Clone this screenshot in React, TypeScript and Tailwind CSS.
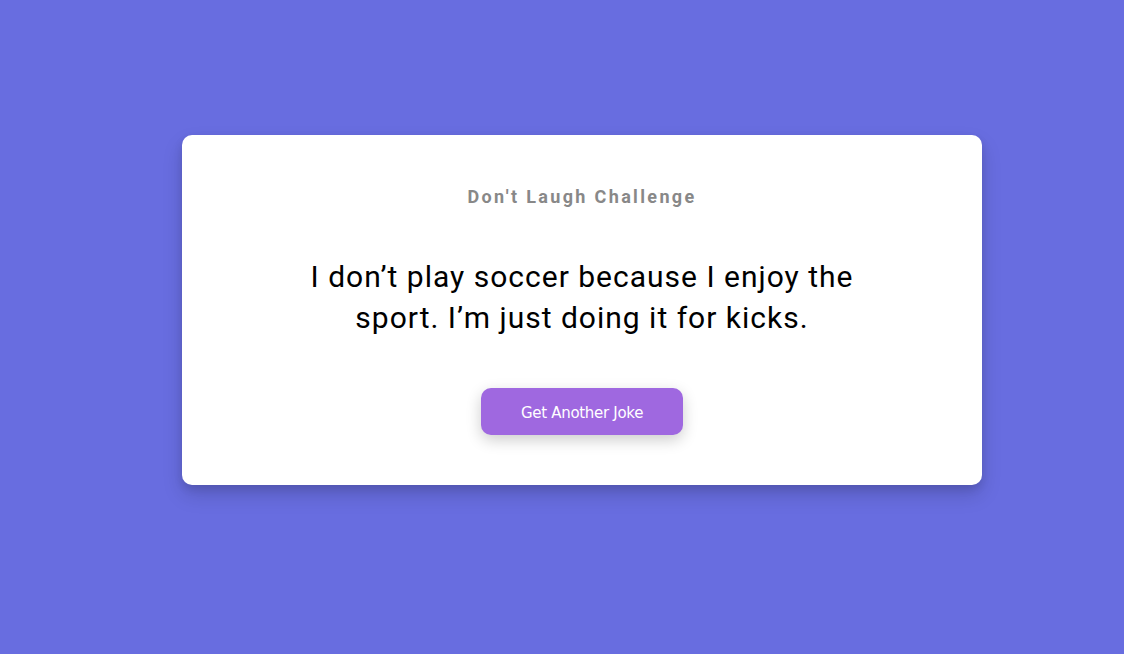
export default function App() {
  return (
    <div className="flex min-h-screen items-center justify-center bg-[#686de0] pb-[34px] pl-10 font-['Roboto',sans-serif]">
      <div className="flex w-[800px] flex-col items-center rounded-[10px] bg-white px-12 pt-12 pb-[50px] text-center shadow-[0_10px_20px_rgba(0,0,0,0.15),0_4px_8px_rgba(0,0,0,0.1)]">
        <h3 className="text-[18px] leading-[28px] font-bold tracking-[2.35px] text-[#888]">
          Don't Laugh Challenge
        </h3>
        <p className="mt-[45px] max-w-[600px] text-[30px] leading-[41px] tracking-[1px] text-black">
          I don’t play soccer because I enjoy the sport. I’m just doing it for kicks.
        </p>
        <button className="mt-[50px] h-[47px] w-[202px] rounded-[10px] bg-[#9f68e0] pt-[3px] font-['DejaVu_Sans',sans-serif] text-[15px] tracking-[-0.3px] text-white shadow-[0_5px_15px_rgba(0,0,0,0.2)]">
          Get Another Joke
        </button>
      </div>
    </div>
  )
}
